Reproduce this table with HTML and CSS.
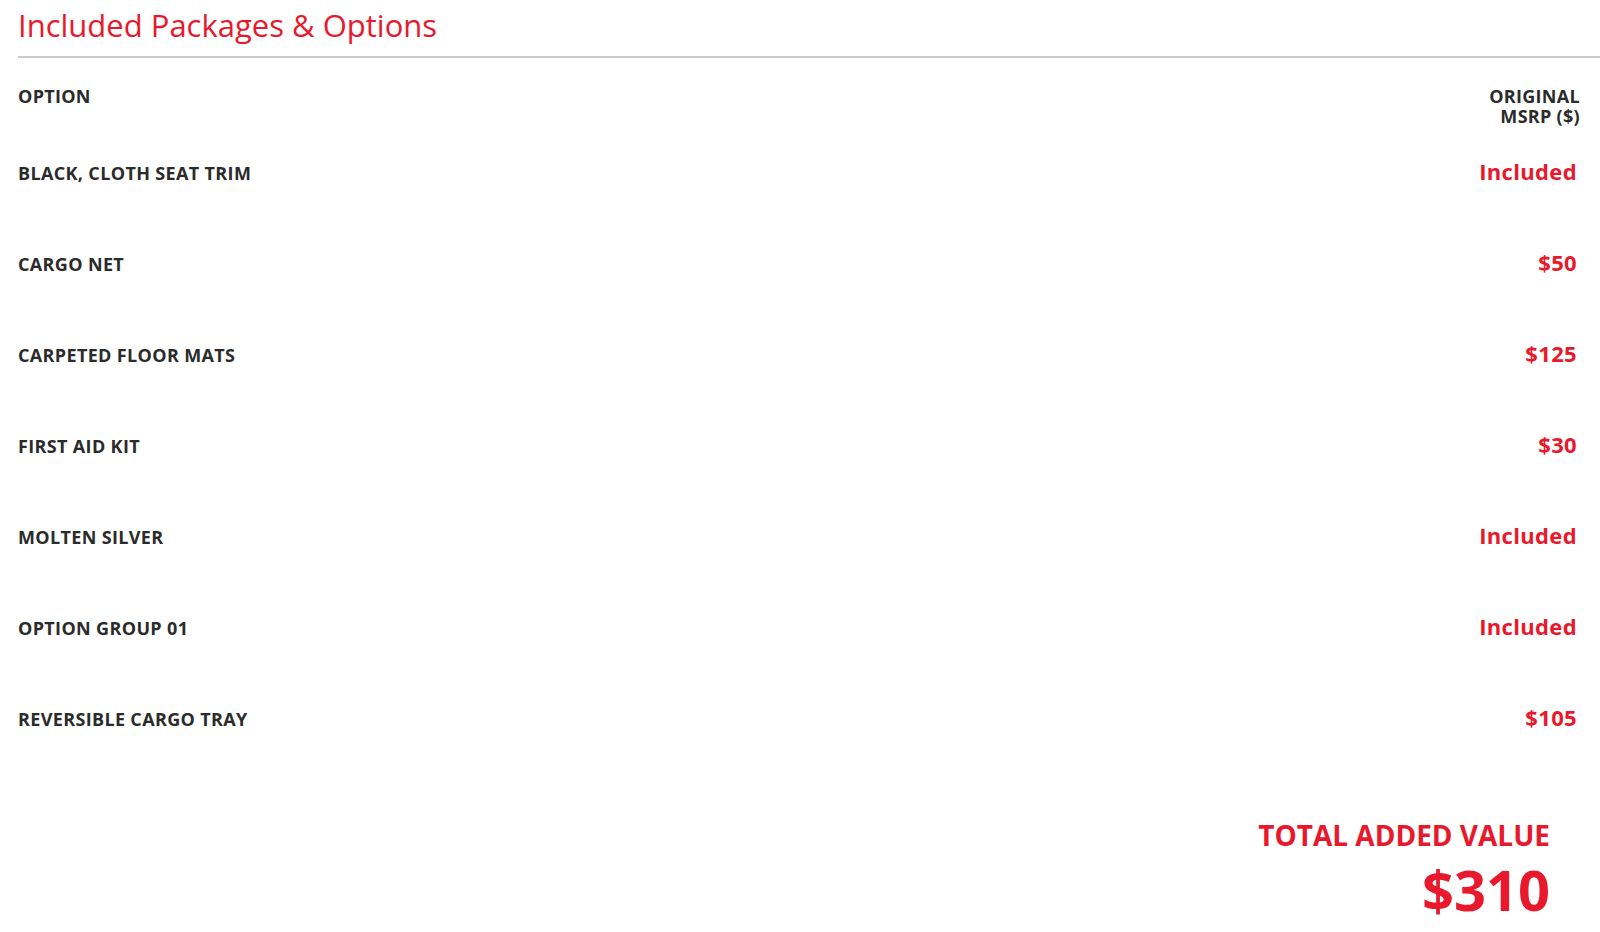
FILE: index.html
```html
<!DOCTYPE html>
<html lang="en">

<head>
    <meta charset="utf-8">
    <meta name="viewport" content="width=device-width, initial-scale=1.0">
    <title>Included Packages &amp; Options</title>
    <link rel="stylesheet" href="styles.css">
</head>

<body>
    <section class="pakker">
        <h2 class="overskrift">Included Packages &amp; Options</h2>

        <div class="tabel">
            <div class="raekke hoved">
                <span>OPTION</span>
                <span class="msrp">ORIGINAL<br>MSRP ($)</span>
            </div>
            <div class="raekke">
                <span class="navn">BLACK, CLOTH SEAT TRIM</span>
                <span class="pris">Included</span>
            </div>
            <div class="raekke">
                <span class="navn">CARGO NET</span>
                <span class="pris">$50</span>
            </div>
            <div class="raekke">
                <span class="navn">CARPETED FLOOR MATS</span>
                <span class="pris">$125</span>
            </div>
            <div class="raekke">
                <span class="navn">FIRST AID KIT</span>
                <span class="pris">$30</span>
            </div>
            <div class="raekke">
                <span class="navn">MOLTEN SILVER</span>
                <span class="pris">Included</span>
            </div>
            <div class="raekke">
                <span class="navn">OPTION GROUP 01</span>
                <span class="pris">Included</span>
            </div>
            <div class="raekke">
                <span class="navn">REVERSIBLE CARGO TRAY</span>
                <span class="pris">$105</span>
            </div>
        </div>

        <div class="total">
            <p class="total-tekst">TOTAL ADDED VALUE</p>
            <p class="total-pris">$310</p>
        </div>
    </section>
</body>

</html>
```

FILE: styles.css
```css
body {
    margin: 0;
    padding: 0;
    background-color: white;
    font-family: 'Open Sans', 'Liberation Sans', sans-serif;
    color: #2b2b2b;
}

.pakker {
    padding-left: 18px;
}

.overskrift {
    margin: 0;
    padding-top: 4px;
    padding-bottom: 10px;
    font-size: 31px;
    font-weight: 400;
    line-height: normal;
    color: #e8192c;
    border-bottom: 2px solid #cbcbcb;
}

.tabel {
    padding-right: 23px;
}

.raekke {
    display: flex;
    justify-content: space-between;
    align-items: baseline;
    height: 91px;
}

.hoved {
    height: auto;
    margin-top: 28px;
    margin-bottom: 30px;
    font-size: 18px;
    font-weight: 700;
    line-height: 20px;
    letter-spacing: 0.3px;
}

.msrp {
    text-align: right;
    margin-right: -3px;
}

.navn {
    font-size: 18px;
    font-weight: 700;
    letter-spacing: 0.35px;
}

.pris {
    font-size: 22px;
    font-weight: 700;
    letter-spacing: 0.35px;
    color: #e8192c;
}

.total {
    text-align: right;
    padding-right: 50px;
    padding-top: 23px;
    color: #e8192c;
    font-weight: 700;
}

.total-tekst {
    margin: 0;
    font-size: 28px;
    line-height: 38px;
}

.total-pris {
    margin: 7px 0 0;
    font-size: 56px;
    line-height: 56px;
}
```
